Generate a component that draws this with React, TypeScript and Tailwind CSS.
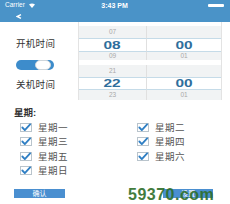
import React from "react";

const BLUE = "bg-[#4a93c8]";

function Check({ label }: { label: string }) {
  return (
    <div className="flex items-center h-[14.5px]">
      <div className="w-[12px] h-[9px] border border-[#b9c4cc] bg-white flex items-center justify-center">
        <svg width="11" height="9" viewBox="0 0 11 9">
          <path d="M1.5 4.5 L4.2 7.3 L10 1" fill="none" stroke="#2f7fc4" strokeWidth="2" strokeLinecap="round" strokeLinejoin="round" />
        </svg>
      </div>
      <span className="ml-[6px] text-[9.5px] leading-none text-[#555] tracking-[0.5px]">{label}</span>
    </div>
  );
}

function Picker({ top, mid, bot, mtop, mbot, h }: { top: string; mid: string; bot: string; mtop: string; mbot: string; h: [number, number, number] }) {
  const small = "text-[6.5px] text-[#a8a8a8] leading-none";
  const big = "text-[11px] font-bold text-[#2f6e9c] leading-none scale-x-[1.4] inline-block";
  return (
    <div className="grid grid-cols-[68px_1fr]">
      <div className={`bg-[#f1f3f4] border-r border-[#e0e0e0] flex items-center justify-center ${small}`} style={{ height: h[0] }}>{top}</div>
      <div className={`bg-[#f1f3f4] flex items-center justify-center ${small}`} style={{ height: h[0] }}>{mtop}</div>
      <div className="bg-white border-y border-[#c5dbe8] border-r border-r-[#e0e0e0] flex items-center justify-center" style={{ height: h[1] }}><span className={big}>{mid}</span></div>
      <div className="bg-white border-y border-[#c5dbe8] flex items-center justify-center" style={{ height: h[1] }}><span className={big}>00</span></div>
      <div className={`bg-[#f1f3f4] border-r border-[#e0e0e0] flex items-center justify-center ${small}`} style={{ height: h[2] }}>{bot}</div>
      <div className={`bg-[#f1f3f4] flex items-center justify-center ${small}`} style={{ height: h[2] }}>{mbot}</div>
    </div>
  );
}

export default function App() {
  return (
    <div className="w-[230px] h-[204px] bg-white relative overflow-hidden font-['Liberation_Sans','Noto_Sans_CJK_SC',sans-serif]">
      <header className={`h-[22px] ${BLUE} flex flex-col`}>
        <div className="h-[10px] flex items-center justify-between pl-[5px] pr-[6px] text-white">
          <div className="flex items-center w-[60px]">
            <span className="text-[6.5px] leading-none">Carrier</span>
            <svg width="6" height="5" viewBox="0 0 6 5" className="ml-[4px]">
              <path d="M0 1.5 Q3 -0.5 6 1.5 L3 5 Z" fill="white" />
            </svg>
          </div>
          <span className="text-[7px] font-bold leading-none">3:43 PM</span>
          <div className="w-[60px] flex justify-end">
            <div className="w-[16px] h-[3px] bg-white rounded-[1px]" />
          </div>
        </div>
        <div className="h-[12px] flex items-center pl-[16px]">
          <svg width="6" height="5" viewBox="0 0 6 5">
            <path d="M5 0.7 L1.2 2.5 L5 4.3" fill="none" stroke="white" strokeWidth="1.4" />
          </svg>
        </div>
      </header>

      <div className="flex h-[78px]">
        <div className="w-[78px] flex flex-col pl-[16px] pt-[17px]">
          <span className="text-[9.5px] leading-[10px] text-[#333] tracking-[0.3px]">开机时间</span>
          <div className="mt-[11px] w-[38px] h-[10px] rounded-full bg-[#3d8ccb] flex items-center justify-end pr-[3px]">
            <div className="w-[16px] h-[10px] rounded-full bg-white border border-[#cfd6db]" />
          </div>
          <span className="mt-[10px] text-[9.5px] leading-[10px] text-[#333] tracking-[0.3px]">关机时间</span>
        </div>
        <div className="w-[144px] border-x border-[#e3e3e3] pt-[4px] flex flex-col">
          <Picker top="07" mid="08" bot="09" mtop="" mbot="01" h={[12, 14, 8]} />
          <div className="h-[5px]" />
          <Picker top="21" mid="22" bot="23" mtop="" mbot="01" h={[12, 13, 10]} />
        </div>
      </div>

      <div className="pl-[14px] mt-[8px] h-[10px] flex items-center">
        <span className="text-[9.5px] leading-none font-bold text-[#333]">星期:</span>
      </div>
      <div className="grid grid-cols-[117px_1fr] pl-[20px] mt-[2px]">
        <Check label="星期一" />
        <Check label="星期二" />
        <Check label="星期三" />
        <Check label="星期四" />
        <Check label="星期五" />
        <Check label="星期六" />
        <Check label="星期日" />
      </div>

      <div className="flex items-center mt-[11px] pl-[14px]">
        <div className="w-[51px] h-[9px] bg-[#4a8fd0] flex items-center justify-center text-white text-[7px] leading-none">确认</div>
        <div className="ml-[98px] w-[50px] h-[9px] bg-[#4a8fd0] flex items-center justify-center text-white text-[7px] leading-none">设置</div>
      </div>

      <div className="absolute left-[128px] top-[187px] text-[16px] font-bold leading-none text-[#2e6e2a] opacity-90 font-['Liberation_Sans',sans-serif] tracking-[0.5px]">
        59370.com
      </div>
    </div>
  );
}
